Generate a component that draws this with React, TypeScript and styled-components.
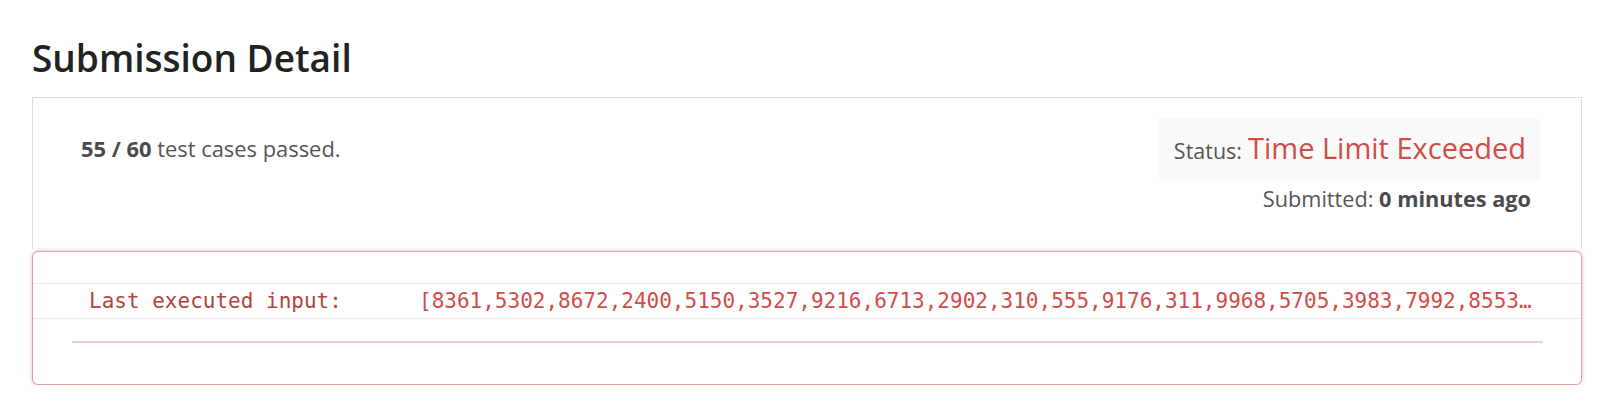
import React from "react";
import styled, { createGlobalStyle } from "styled-components";

const GlobalStyle = createGlobalStyle`
  html, body {
    margin: 0;
    padding: 0;
    background: #ffffff;
  }
  body {
    font-family: "Open Sans", "Noto Sans", "DejaVu Sans", sans-serif;
    color: #555555;
  }
`;

const Page = styled.div`
  padding: 0 35px 0 32px;
`;

const Title = styled.h1`
  margin: 0 0 19px 0;
  padding: 38px 0 0 0;
  font-size: 37px;
  font-weight: 600;
  line-height: 40px;
  color: #222222;
`;

const SummaryPanel = styled.section`
  border: 1px solid #dddddd;
  border-bottom: none;
  height: 152px;
  box-sizing: border-box;
  display: flex;
  justify-content: space-between;
  align-items: flex-start;
`;

const Passed = styled.p`
  margin: 38px 0 0 48px;
  font-size: 21.9px;
  line-height: 26px;
  color: #555555;
`;

const Strong = styled.strong`
  font-weight: 700;
  color: #4a4a4a;
`;

const StatusCol = styled.div`
  display: flex;
  flex-direction: column;
  align-items: flex-end;
  padding: 20px 41px 0 0;
`;

const StatusBox = styled.div`
  background: #fafafa;
  height: 63px;
  box-sizing: border-box;
  padding: 10px 14px 0 15px;
  display: flex;
  align-items: baseline;
  white-space: nowrap;
`;

const StatusLabel = styled.span`
  font-size: 21.5px;
  color: #555555;
  margin-right: 6px;
`;

const StatusValue = styled.span<{ $tone: string }>`
  font-size: 29px;
  color: ${(p) => p.$tone};
`;

const Submitted = styled.div`
  margin: 5px 9px 0 0;
  font-size: 21.7px;
  line-height: 26px;
  color: #555555;
`;

const ErrorPanel = styled.section`
  margin-top: 2px;
  border: 1px solid #dca2a2;
  border-radius: 6px;
  box-shadow: 0 0 4px rgba(205, 90, 90, 0.4);
  height: 134px;
  box-sizing: border-box;
  background: #ffffff;
`;

const Row = styled.div<{ $h: number }>`
  height: ${(p) => p.$h}px;
  box-sizing: border-box;
  border-bottom: 1px solid #ececec;
  display: grid;
  grid-template-columns: 386px 1fr;
  align-items: center;
`;

const Label = styled.span`
  padding-left: 56px;
  font-family: "DejaVu Sans Mono", "Liberation Mono", monospace;
  font-size: 21px;
  color: #b2443f;
  white-space: nowrap;
`;

const Value = styled.span`
  padding-right: 38px;
  font-family: "DejaVu Sans Mono", "Liberation Mono", monospace;
  font-size: 21px;
  color: #d24c48;
  white-space: nowrap;
  overflow: hidden;
`;

const Divider = styled.hr`
  margin: 22px 38px 0 39px;
  border: none;
  border-top: 2px solid #f3cdcd;
  height: 0;
`;

export default function App() {
  return (
    <>
      <GlobalStyle />
      <Page>
        <Title>Submission Detail</Title>
        <SummaryPanel>
          <Passed>
            <Strong>55 / 60</Strong> test cases passed.
          </Passed>
          <StatusCol>
            <StatusBox>
              <StatusLabel>Status:</StatusLabel>
              <StatusValue $tone="#d24c48">Time Limit Exceeded</StatusValue>
            </StatusBox>
            <Submitted>
              Submitted: <Strong>0 minutes ago</Strong>
            </Submitted>
          </StatusCol>
        </SummaryPanel>
        <ErrorPanel>
          <Row $h={32} />
          <Row $h={35}>
            <Label>Last executed input:</Label>
            <Value>
              [8361,5302,8672,2400,5150,3527,9216,6713,2902,310,555,9176,311,9968,5705,3983,7992,8553…
            </Value>
          </Row>
          <Divider />
        </ErrorPanel>
      </Page>
    </>
  );
}
